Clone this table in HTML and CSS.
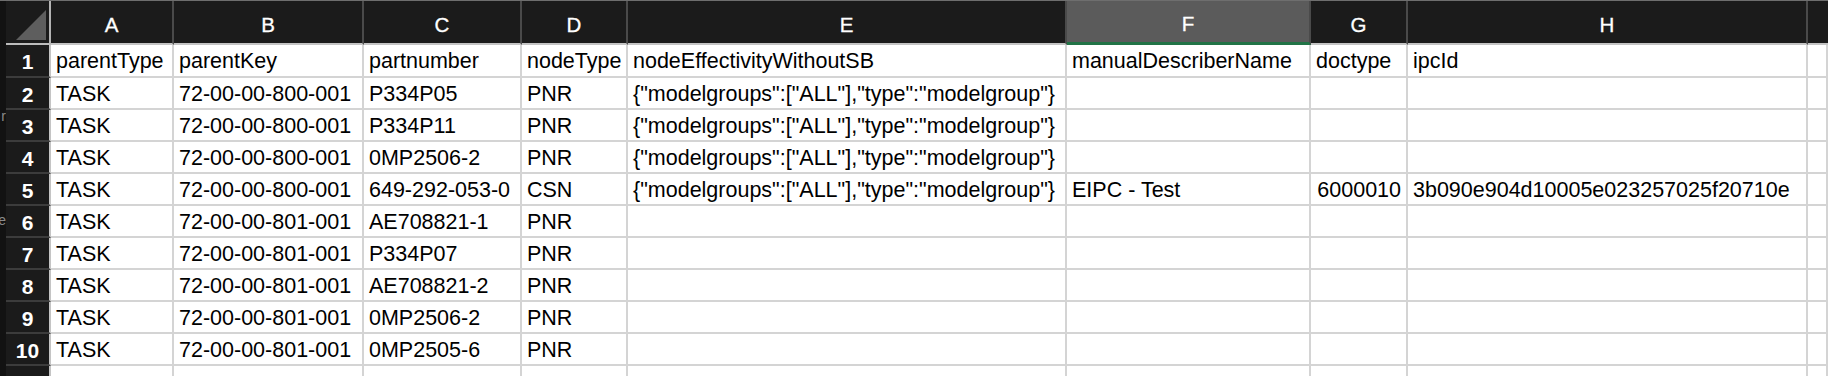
FILE: index.html
```html
<!DOCTYPE html>
<html>
<head>
<meta charset="utf-8">
<link rel="stylesheet" href="styles.css">
</head>
<body>
<div class="app">
  <div class="strip"><span class="strip-r">r</span><span class="strip-e">e</span></div>
  <div class="sheet">
    <div class="corner"><svg width="43" height="42" viewBox="0 0 43 42"><polygon points="10,39 40,9 40,39" fill="#5e5e5e"/></svg></div>
    <div class="colh">A</div>
    <div class="colh">B</div>
    <div class="colh">C</div>
    <div class="colh">D</div>
    <div class="colh">E</div>
    <div class="colh sel">F</div>
    <div class="colh">G</div>
    <div class="colh">H</div>
    <div class="colh last"></div>

    <div class="rowh">1</div><div class="c">parentType</div><div class="c">parentKey</div><div class="c">partnumber</div><div class="c">nodeType</div><div class="c">nodeEffectivityWithoutSB</div><div class="c">manualDescriberName</div><div class="c">doctype</div><div class="c">ipcId</div><div class="c"></div>

    <div class="rowh">2</div><div class="c">TASK</div><div class="c">72-00-00-800-001</div><div class="c">P334P05</div><div class="c">PNR</div><div class="c">{"modelgroups":["ALL"],"type":"modelgroup"}</div><div class="c"></div><div class="c"></div><div class="c"></div><div class="c"></div>

    <div class="rowh">3</div><div class="c">TASK</div><div class="c">72-00-00-800-001</div><div class="c">P334P11</div><div class="c">PNR</div><div class="c">{"modelgroups":["ALL"],"type":"modelgroup"}</div><div class="c"></div><div class="c"></div><div class="c"></div><div class="c"></div>

    <div class="rowh">4</div><div class="c">TASK</div><div class="c">72-00-00-800-001</div><div class="c">0MP2506-2</div><div class="c">PNR</div><div class="c">{"modelgroups":["ALL"],"type":"modelgroup"}</div><div class="c"></div><div class="c"></div><div class="c"></div><div class="c"></div>

    <div class="rowh">5</div><div class="c">TASK</div><div class="c">72-00-00-800-001</div><div class="c">649-292-053-0</div><div class="c">CSN</div><div class="c">{"modelgroups":["ALL"],"type":"modelgroup"}</div><div class="c">EIPC - Test</div><div class="c num">6000010</div><div class="c">3b090e904d10005e023257025f20710e</div><div class="c"></div>

    <div class="rowh">6</div><div class="c">TASK</div><div class="c">72-00-00-801-001</div><div class="c">AE708821-1</div><div class="c">PNR</div><div class="c"></div><div class="c"></div><div class="c"></div><div class="c"></div><div class="c"></div>

    <div class="rowh">7</div><div class="c">TASK</div><div class="c">72-00-00-801-001</div><div class="c">P334P07</div><div class="c">PNR</div><div class="c"></div><div class="c"></div><div class="c"></div><div class="c"></div><div class="c"></div>

    <div class="rowh">8</div><div class="c">TASK</div><div class="c">72-00-00-801-001</div><div class="c">AE708821-2</div><div class="c">PNR</div><div class="c"></div><div class="c"></div><div class="c"></div><div class="c"></div><div class="c"></div>

    <div class="rowh">9</div><div class="c">TASK</div><div class="c">72-00-00-801-001</div><div class="c">0MP2506-2</div><div class="c">PNR</div><div class="c"></div><div class="c"></div><div class="c"></div><div class="c"></div><div class="c"></div>

    <div class="rowh">10</div><div class="c">TASK</div><div class="c">72-00-00-801-001</div><div class="c">0MP2505-6</div><div class="c">PNR</div><div class="c"></div><div class="c"></div><div class="c"></div><div class="c"></div><div class="c"></div>

    <div class="rowh">11</div><div class="c"></div><div class="c"></div><div class="c"></div><div class="c"></div><div class="c"></div><div class="c"></div><div class="c"></div><div class="c"></div><div class="c"></div>
  </div>
</div>
</body>
</html>
```
FILE: styles.css
```css
html, body {
  margin: 0;
  padding: 0;
  background: #ffffff;
  overflow: hidden;
}
body {
  width: 1828px;
  height: 376px;
  font-family: "Liberation Sans", Arial, sans-serif;
}
.app {
  display: flex;
  height: 376px;
  border-top: 1px solid #6e6e6e;
  box-sizing: border-box;
  overflow: hidden;
}
.strip {
  width: 6px;
  flex: none;
  background: #121212;
  display: flex;
  flex-direction: column;
  align-items: flex-end;
  overflow: hidden;
  color: #8a8a8a;
  font-size: 14px;
  line-height: 14px;
}
.strip-r { margin-top: 108px; }
.strip-e { margin-top: 90px; }
.sheet {
  flex: 1;
  display: grid;
  grid-template-columns: 45px 123px 190px 158px 106px 439px 244px 97px 400px 1fr;
  grid-template-rows: 44px 33px repeat(10, 32px);
  background: #ffffff;
}
.sheet > div {
  box-sizing: border-box;
  border-right: 2px solid #d4d4d4;
  border-bottom: 2px solid #d4d4d4;
  white-space: nowrap;
  overflow: visible;
}
.corner {
  background: #1b1b1b;
  border-right-color: #b4b4b4 !important;
  border-bottom-color: #bcbcbc !important;
}
.corner svg { display: block; }
.colh {
  background: #1b1b1b;
  color: #ffffff;
  font-weight: normal;
  font-size: 20.5px;
  text-align: center;
  padding-top: 6px;
  line-height: 36px;
  -webkit-text-stroke: 0.3px #ffffff;
  border-right-color: #4a4a4a !important;
  border-bottom-color: #c4c4c4 !important;
}
.colh.sel {
  background: #5b5b5b;
  border-bottom: 3px solid #217346 !important;
  padding-top: 5px;
}
.colh.last { border-right: none !important; }
.rowh {
  background: #1b1b1b;
  color: #ffffff;
  font-weight: bold;
  font-size: 21px;
  text-align: center;
  padding-top: 3px;
  line-height: 27px;
  border-right-color: #c4c4c4 !important;
  border-bottom-color: #3c3c3c !important;
}
.c {
  color: #000000;
  font-size: 21.5px;
  padding: 3px 5px 0 5px;
  line-height: 27px;
}
.c.num { text-align: right; }
```
